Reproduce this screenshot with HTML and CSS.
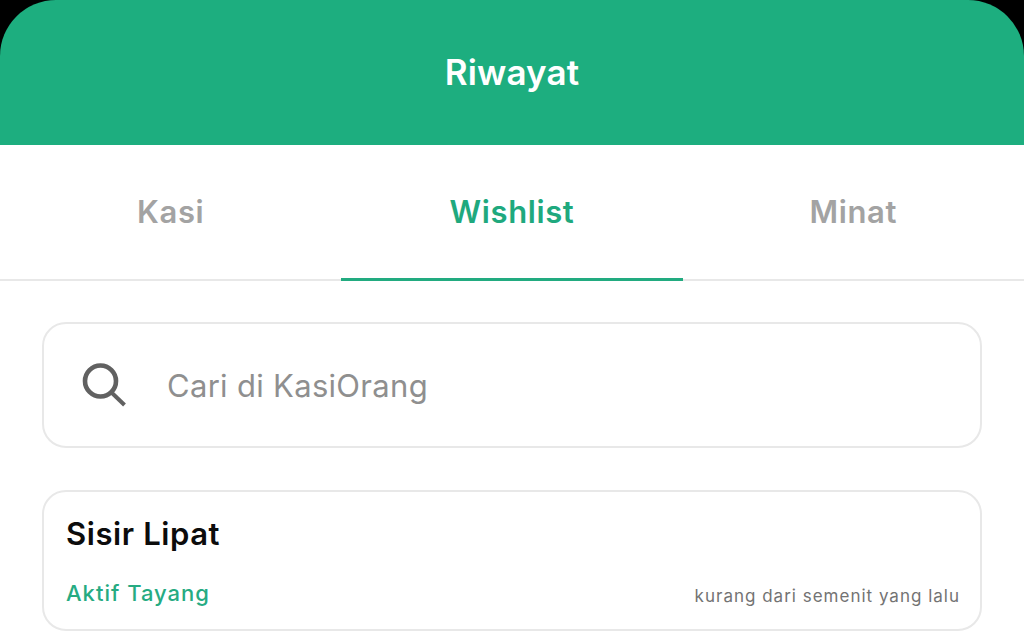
FILE: index.html
```html
<!DOCTYPE html>
<html lang="id">
<head>
<meta charset="utf-8">
<title>Riwayat</title>
<link rel="stylesheet" href="styles.css">
</head>
<body>
<div class="screen">
  <header class="header"><h1 class="title">Riwayat</h1></header>
  <nav class="tabs">
    <div class="tab">Kasi</div>
    <div class="tab tab-active">Wishlist</div>
    <div class="tab">Minat</div>
  </nav>
  <main class="content">
    <div class="search">
      <svg class="search-icon" width="46" height="46" viewBox="0 0 46 46" fill="none" stroke="#616161" stroke-width="4.6">
        <circle cx="19.5" cy="19" r="15.5"/>
        <path d="M30.5 30.5 L43.5 43" stroke-width="4"/>
      </svg>
      <span class="search-text">Cari di KasiOrang</span>
    </div>
    <article class="card">
      <div class="card-title">Sisir Lipat</div>
      <div class="card-foot">
        <span class="status">Aktif Tayang</span>
        <span class="time">kurang dari semenit yang lalu</span>
      </div>
    </article>
  </main>
</div>
</body>
</html>
```
FILE: styles.css
```css
* { box-sizing: border-box; }
html, body { margin: 0; height: 100%; background: #000; }
body { font-family: Inter, "Liberation Sans", sans-serif; overflow: hidden; }
.screen { width: 1024px; height: 644px; display: flex; flex-direction: column; background: #000; }
.header {
  height: 145px; flex: none; background: #1dae7f;
  border-radius: 56px 56px 0 0;
  display: flex; align-items: center; justify-content: center;
}
.title { margin: 0; font-size: 35px; font-weight: 600; color: #fff; line-height: 1; letter-spacing: 0.1px; }
.tabs { height: 136px; flex: none; display: flex; background: #fff; border-bottom: 2px solid #e8e8e8; }
.tab {
  flex: 1; margin-bottom: -2px; display: flex; align-items: center; justify-content: center;
  padding-top: 0; font-size: 31px; font-weight: 600; color: #a3a3a3; letter-spacing: 0.6px;
  border-bottom: 3px solid transparent;
}
.tab-active { color: #1fa97e; border-bottom-color: #22ab80; }
.content { flex: 1; background: #fff; padding: 41px 42px 14px; display: flex; flex-direction: column; gap: 42px; }
.search {
  height: 126px; flex: none; border: 2px solid #e8e8e8; border-radius: 24px;
  display: flex; align-items: center; padding-left: 37px; gap: 40px;
}
.search-icon { flex: none; width: 46px; height: 46px; }
.search-text { font-size: 31px; color: #8f8f8f; letter-spacing: 0.3px; }
.card {
  height: 141px; flex: none; border: 2px solid #e8e8e8; border-radius: 24px;
  padding: 22px 20px 0 22px; display: flex; flex-direction: column;
}
.card-title { font-size: 31px; font-weight: 600; color: #0c0c0c; line-height: 40px; letter-spacing: 0.6px; }
.card-foot { display: flex; justify-content: space-between; align-items: center; margin-top: 26px; }
.status { font-size: 22px; font-weight: 500; color: #26ab82; letter-spacing: 1px; }
.time { font-size: 17px; color: #737373; letter-spacing: 1px; padding-top: 5px; }
```
